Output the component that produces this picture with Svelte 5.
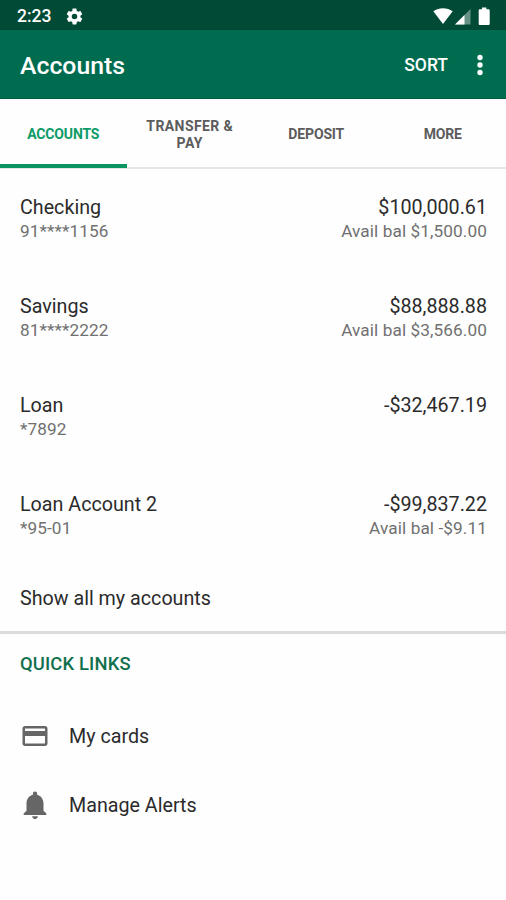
<script>
  const tabs = ['ACCOUNTS', 'TRANSFER & PAY', 'DEPOSIT', 'MORE'];
  const accounts = [
    { name: 'Checking', number: '91****1156', balance: '$100,000.61', available: 'Avail bal $1,500.00' },
    { name: 'Savings', number: '81****2222', balance: '$88,888.88', available: 'Avail bal $3,566.00' },
    { name: 'Loan', number: '*7892', balance: '-$32,467.19', available: '' },
    { name: 'Loan Account 2', number: '*95-01', balance: '-$99,837.22', available: 'Avail bal -$9.11' }
  ];
  let active = $state(0);
</script>

<div class="screen">
  <div class="status">
    <span class="time">2:23</span>
    <svg class="gear" viewBox="0 0 24 24" width="19" height="19"><path fill="#fff" d="M19.43 12.98c.04-.32.07-.64.07-.98s-.03-.66-.07-.98l2.11-1.65c.19-.15.24-.42.12-.64l-2-3.46c-.12-.22-.39-.3-.61-.22l-2.49 1c-.52-.4-1.08-.73-1.69-.98l-.38-2.65A.49.49 0 0 0 14 2h-4c-.25 0-.46.18-.49.42l-.38 2.65c-.61.25-1.17.59-1.69.98l-2.49-1c-.23-.09-.49 0-.61.22l-2 3.46c-.13.22-.07.49.12.64l2.11 1.65c-.04.32-.07.65-.07.98s.03.66.07.98l-2.11 1.65c-.19.15-.24.42-.12.64l2 3.46c.12.22.39.3.61.22l2.49-1c.52.4 1.08.73 1.69.98l.38 2.65c.03.24.24.42.49.42h4c.25 0 .46-.18.49-.42l.38-2.65c.61-.25 1.17-.59 1.69-.98l2.49 1c.23.09.49 0 .61-.22l2-3.46c.12-.22.07-.49-.12-.64zM12 15.5a3.5 3.5 0 1 1 0-7 3.5 3.5 0 0 1 0 7z" /></svg>
    <svg class="signals" viewBox="0 0 60 20" width="60" height="20">
      <path fill="#fff" d="M0.3 5.2C6 1.200 14 1.200 19.700 5.200L10 18z" />
      <path fill="#fff" fill-opacity=".4" d="M22 18.500L37.500 3v15.500z" />
      <path fill="#fff" d="M22 18.500L31.500 9v9.500z" />
      <path fill="#fff" d="M49 1.500h4.400v1.700h2c.8 0 1.300.5 1.300 1.300v13.200c0 .8-.5 1.300-1.300 1.300h-8.400c-.8 0-1.300-.5-1.300-1.300V4.500c0-.8.5-1.300 1.300-1.300h2z" />
    </svg>
  </div>

  <header>
    <h1>Accounts</h1>
    <button class="sort">SORT</button>
    <button class="more" aria-label="More options">
      <svg viewBox="0 0 24 24" width="30" height="30" fill="#fff"><circle cx="12" cy="6" r="2.150" /><circle cx="12" cy="12" r="2.150" /><circle cx="12" cy="18" r="2.150" /></svg>
    </button>
  </header>

  <nav>
    {#each tabs as tab, i}
      <button class:active={active === i} class:wrapped={tab.length > 10} onclick={() => (active = i)}><span>{tab}</span></button>
    {/each}
  </nav>

  <main>
    {#each accounts as a}
      <section class="account">
        <div>
          <p class="primary">{a.name}</p>
          <p class="secondary">{a.number}</p>
        </div>
        <div class="right">
          <p class="primary">{a.balance}</p>
          <p class="secondary">{a.available}</p>
        </div>
      </section>
    {/each}
    <button class="show">Show all my accounts</button>
  </main>

  <section class="links">
    <h2>QUICK LINKS</h2>
    <button class="link">
      <span class="icon"><svg viewBox="0 0 24 24" width="30" height="30"><path fill="#666" d="M20 4H4c-1.110 0-1.990.89-1.990 2L2 18c0 1.110.89 2 2 2h16c1.110 0 2-.89 2-2V6c0-1.110-.89-2-2-2zm0 14H4v-6h16v6zm0-10H4V6h16v2z" /></svg></span>
      My cards
    </button>
    <button class="link">
      <span class="icon"><svg viewBox="0 0 24 24" width="34" height="34"><path fill="#666" d="M12 22c1.100 0 2-.9 2-2h-4c0 1.100.89 2 2 2zm6-6v-5c0-3.070-1.640-5.640-4.500-6.320V4c0-.83-.67-1.500-1.500-1.500s-1.500.67-1.500 1.500v.68C7.630 5.360 6 7.920 6 11v5l-2 2v1h16v-1l-2-2z" /></svg></span>
      Manage Alerts
    </button>
  </section>
</div>

<style>
  :global(body) { background: #fff; }
  .screen {
    width: 506px;
    height: 900px;
    overflow: hidden;
    background: #fefefe;
    font-family: Roboto, sans-serif;
    color: #2b2b2b;
  }
  p, h1, h2 { margin: 0; }
  button { margin: 0; padding: 0; border: 0; background: none; font: inherit; color: inherit; }
  svg { display: block; flex: none; }
  .status {
    display: flex;
    align-items: center;
    box-sizing: border-box;
    height: 30px;
    padding: 2px 13px 0 17px;
    background: #014a36;
    color: #fff;
  }
  .time { width: 48px; font-size: 17.5px; font-weight: 500; line-height: 26px; }
  .signals { margin-left: auto; }
  header {
    display: flex;
    align-items: center;
    box-sizing: border-box;
    height: 69px;
    padding: 2px 11px 0 20px;
    background: #006c4f;
    border-bottom: 1px solid #005b42;
    color: #fff;
  }
  h1 { flex: 1; padding-top: 2px; font-size: 24.8px; font-weight: 500; line-height: 30px; }
  .sort { margin-right: 17px; font-size: 17.5px; font-weight: 500; }
  nav {
    display: flex;
    box-sizing: border-box;
    height: 70px;
    border-bottom: 2px solid #e6e6e6;
  }
  nav button {
    position: relative;
    flex: 1;
    display: flex;
    align-items: center;
    justify-content: center;
    font-size: 14px;
    font-weight: 700;
    line-height: 17px;
    letter-spacing: -.15px;
    color: #5c5c5c;
  }
  nav span { width: 94px; padding-top: 2px; }
  nav .wrapped { letter-spacing: .4px; }
  nav .wrapped span { padding-top: 3px; }
  nav .active { color: #0c9b67; }
  nav .active::after {
    content: '';
    position: absolute;
    left: 0;
    right: 0;
    bottom: -1px;
    height: 4px;
    background: #0c9463;
  }
  .account {
    display: flex;
    justify-content: space-between;
    box-sizing: border-box;
    height: 99px;
    padding: 26px 19px 0 20px;
  }
  .right { text-align: right; }
  .primary { font-size: 19.7px; line-height: 26px; }
  .secondary { font-size: 17.2px; line-height: 21px; letter-spacing: .1px; color: #707070; }
  .show {
    display: block;
    width: 100%;
    height: 66px;
    padding: 0 20px;
    text-align: left;
    font-size: 19.7px;
  }
  .links { border-top: 3px solid #dcdcdc; }
  h2 {
    padding: 16px 20px 24px;
    font-size: 18.4px;
    font-weight: 500;
    line-height: 28px;
    letter-spacing: .15px;
    color: #10704d;
  }
  .link {
    display: flex;
    align-items: center;
    width: 100%;
    height: 69px;
    padding-left: 18px;
    font-size: 19.7px;
  }
  .icon { display: flex; justify-content: center; width: 34px; margin: -2px 17px 0 0; }
</style>
